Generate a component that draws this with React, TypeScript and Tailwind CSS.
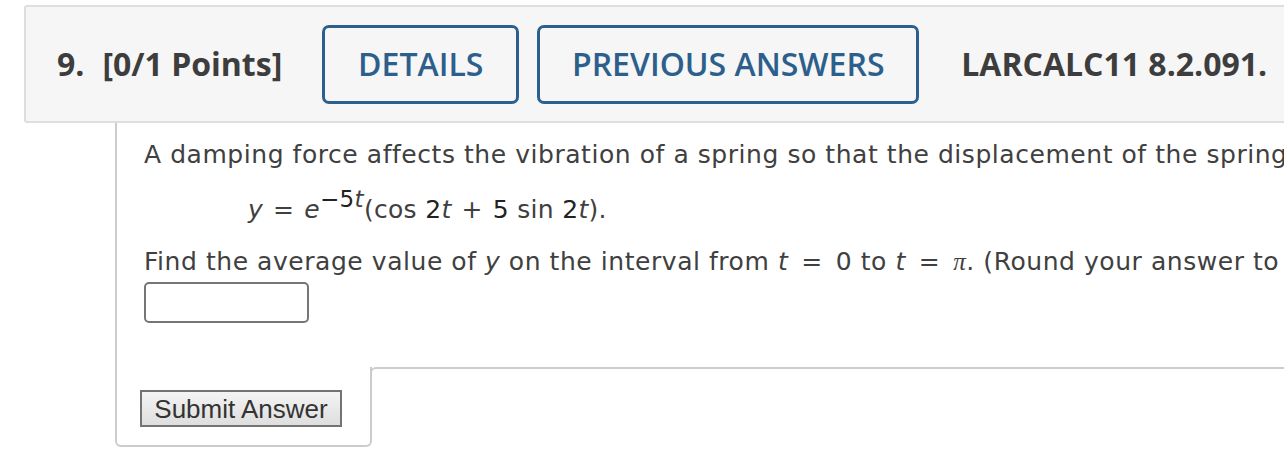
import React from "react";

const headerFont = { fontFamily: '"Open Sans", "Noto Sans", sans-serif' };

//
// 問題ヘッダー
//
const QuestionHeader: React.FC = () => (
  <div
    className="ml-[24px] mt-[5px] flex h-[118px] w-[1400px] items-center rounded-[3px] border-2 border-[#dedede] bg-[#f6f6f6] pl-[31px] text-[32px] text-[#3d3d3d]"
    style={headerFont}
  >
    <span className="font-bold">9.</span>
    <span className="ml-[18px] font-bold">[0/1 Points]</span>
    <button
      type="button"
      className="ml-[40px] h-[79px] w-[197px] rounded-[7px] border-[3px] border-[#2d5f8c] font-semibold text-[#2d5f8c]"
    >
      DETAILS
    </button>
    <button
      type="button"
      className="ml-[18px] h-[79px] w-[382px] rounded-[7px] border-[3px] border-[#2d5f8c] font-semibold text-[#2d5f8c]"
    >
      PREVIOUS ANSWERS
    </button>
    <span className="ml-[42px] font-bold">LARCALC11 8.2.091.</span>
  </div>
);

// 変数（斜体）
const V: React.FC<React.PropsWithChildren> = ({ children }) => (
  <span className="italic">{children}</span>
);

// 演算子
const Op: React.FC<React.PropsWithChildren<{ wide?: boolean }>> = ({
  children,
  wide,
}) => <span className={wide ? "mx-[13px]" : "mx-[10px]"}>{children}</span>;

export default function App() {
  return (
    <div className="h-[468px] w-full overflow-hidden bg-white">
      <QuestionHeader />

      <div
        className="ml-[115px] w-[1400px] text-[25px] text-[#404040]"
        style={{ fontFamily: 'Verdana, "DejaVu Sans", sans-serif' }}
      >
        {/* 問題本文 */}
        <div className="h-[244px] border-l-2 border-[#cccccc] pl-[27px] pt-[18px]">
          <p className="whitespace-nowrap leading-[28px] tracking-[0.55px]">
            A damping force affects the vibration of a spring so that the
            displacement of the spring is given by
          </p>
          <p className="mt-[25px] flex items-baseline whitespace-nowrap pl-[104px] leading-[32px] tracking-[0.3px]">
            <V>y</V>
            <Op>=</Op>
            <V>e</V>
            <span className="relative -top-[11px] text-[23px]">
              <span className="text-[#222]">−5</span>
              <V>t</V>
            </span>
            <span className="whitespace-pre">(cos </span>
            <span className="text-[#222]">2</span>
            <V>t</V>
            <Op>+</Op>
            <span className="whitespace-pre text-[#222]">5 </span>
            <span className="whitespace-pre">sin </span>
            <span className="text-[#222]">2</span>
            <V>t</V>
            <span>).</span>
          </p>
          <p className="mt-[22px] flex items-baseline whitespace-nowrap leading-[28px] tracking-[0.55px]">
            <span className="whitespace-pre">Find the average value of </span>
            <V>y</V>
            <span className="whitespace-pre"> on the interval from </span>
            <V>t</V>
            <Op wide>=</Op>
            <span className="whitespace-pre">0 to </span>
            <V>t</V>
            <Op wide>=</Op>
            <span
              className="italic"
              style={{ fontFamily: '"Liberation Serif", serif' }}
            >
              π
            </span>
            <span className="whitespace-pre">
              . (Round your answer to four decimal places.)
            </span>
          </p>
          <input
            type="text"
            className="mt-[6px] block h-[41px] w-[165px] rounded-[5px] border-2 border-[#767676] bg-white"
          />
        </div>

        {/* 送信エリア */}
        <div className="flex">
          <div className="h-[80px] w-[257px] rounded-b-[6px] border-2 border-t-0 border-[#cccccc] pl-[23px] pt-[23px]">
            <button
              type="button"
              className="h-[37px] w-[202px] border-2 border-[#737373] bg-gradient-to-b from-[#f4f4f4] to-[#dedede] text-[26px] leading-none text-[#333]"
              style={{ fontFamily: '"Liberation Sans", Arial, sans-serif' }}
            >
              Submit Answer
            </button>
          </div>
          <div className="-ml-[2px] h-[12px] flex-1 rounded-tl-[6px] border-l-2 border-t-2 border-[#cccccc]" />
        </div>
      </div>
    </div>
  );
}
